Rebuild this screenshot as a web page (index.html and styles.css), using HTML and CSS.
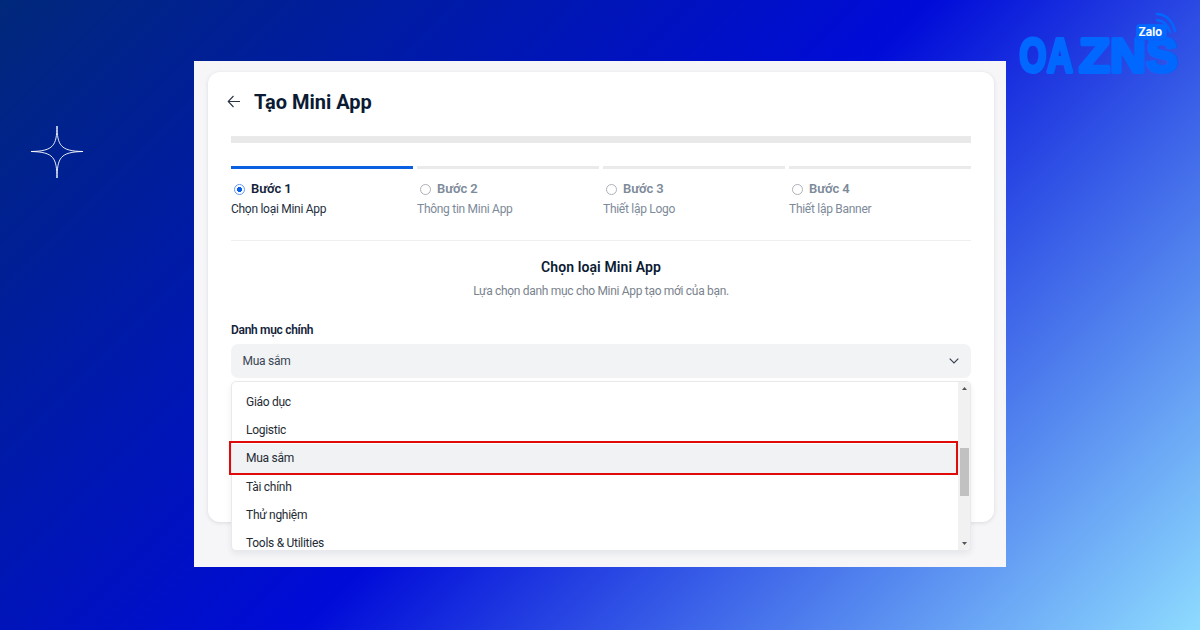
FILE: index.html
```
<!DOCTYPE html>
<html lang="vi">
<head>
<meta charset="utf-8">
<title>Tạo Mini App</title>
<link rel="stylesheet" href="styles.css">
</head>
<body>
<main class="stage">
  <svg class="spark" viewBox="0 0 54 54" aria-hidden="true"><path d="M27 1C27.4 20 30 26.2 53 26.500C30 27 27.4 33 27 53C26.6 33 24 27 1 26.500C24 26.2 26.6 20 27 1Z"/></svg>

  <svg class="logo" viewBox="0 0 170 72" role="img" aria-label="Zalo OA ZNS">
    <g class="logo-letters">
      <text x="9.500" y="63" textLength="27" lengthAdjust="spacingAndGlyphs">O</text>
      <text x="37" y="63" textLength="26" lengthAdjust="spacingAndGlyphs">A</text>
      <text x="69" y="63" textLength="31" lengthAdjust="spacingAndGlyphs">Z</text>
      <text x="100" y="63" textLength="36" lengthAdjust="spacingAndGlyphs">N</text>
      <text x="136.500" y="63" textLength="31" lengthAdjust="spacingAndGlyphs">S</text>
    </g>
    <path class="logo-bubble" d="M130 15H153Q157 15 157 19V27Q157 31 153 31H143L138 34V31H130Q126 31 126 27V19Q126 15 130 15Z"/>
    <text class="logo-zalo" x="128.500" y="27" textLength="23.500" lengthAdjust="spacingAndGlyphs">Zalo</text>
    <g class="logo-waves">
      <path d="M147 5C157 5.500 163 13 165 22"/>
      <path d="M147 11C153 11.500 158 16 160 23"/>
    </g>
  </svg>

  <section class="panel">
    <div class="card">
      <header class="head">
        <svg class="back" viewBox="0 0 14 14"><path d="M13 6.500H1.500M6.500 1L1.200 6.500L6.500 12"/></svg>
        <h1 class="title">Tạo Mini App</h1>
      </header>
      <div class="bar"></div>
      <div class="steps">
        <div class="step active"><div class="step-name"><i class="radio"></i>Bước 1</div><div class="step-text">Chọn loại Mini App</div></div>
        <div class="step"><div class="step-name"><i class="radio"></i>Bước 2</div><div class="step-text">Thông tin Mini App</div></div>
        <div class="step"><div class="step-name"><i class="radio"></i>Bước 3</div><div class="step-text">Thiết lập Logo</div></div>
        <div class="step"><div class="step-name"><i class="radio"></i>Bước 4</div><div class="step-text">Thiết lập Banner</div></div>
      </div>
      <h2 class="subtitle">Chọn loại Mini App</h2>
      <p class="hint">Lựa chọn danh mục cho Mini App tạo mới của bạn.</p>
      <div class="label">Danh mục chính</div>
      <div class="select">
        <span>Mua sắm</span>
        <svg class="chevron" viewBox="0 0 10 6"><path d="M.7 .7L5 5L9.300 .7"/></svg>
        <div class="menu">
          <ul class="options">
            <li>Giáo dục</li>
            <li>Logistic</li>
            <li class="chosen">Mua sắm</li>
            <li>Tài chính</li>
            <li>Thử nghiệm</li>
            <li>Tools &amp; Utilities</li>
          </ul>
          <div class="scroll">
            <svg class="tri" viewBox="0 0 5 3"><path d="M0 3L2.500 0L5 3Z"/></svg>
            <div class="thumb"></div>
            <svg class="tri" viewBox="0 0 5 3"><path d="M0 0L2.500 3L5 0Z"/></svg>
          </div>
          <div class="marker"></div>
        </div>
      </div>
    </div>
  </section>
</main>
</body>
</html>
```
FILE: styles.css
```
* { box-sizing: border-box; }
body { margin: 0; font-family: Roboto, "Liberation Sans", sans-serif; }
.stage {
  position: relative;
  width: 1200px;
  height: 630px;
  padding: 61px 194px 63px;
  overflow: hidden;
  background: linear-gradient(135deg, #00287a 0%, #000bd8 50.8%, #8edbff 100%);
}
.spark { position: absolute; left: 30px; top: 125px; width: 54px; height: 54px; }
.spark path { fill: none; stroke: #fff; stroke-width: .9; }

.logo { position: absolute; left: 1010px; top: 9px; width: 170px; height: 72px; }
.logo-letters { font: 700 48px "Liberation Sans", sans-serif; fill: #0068ff; stroke: #0068ff; stroke-width: 3.8; stroke-linejoin: round; }
.logo-bubble { fill: #0068ff; stroke: #1a50ea; stroke-width: .5; }
.logo-zalo { font: 600 11.5px Inter, sans-serif; fill: #fff; stroke: #fff; stroke-width: .2; }
.logo-waves { fill: none; stroke: #0068ff; stroke-width: 2.4; stroke-linecap: round; }

.panel { width: 812px; height: 506px; padding: 11px 12px 45px 14px; background: #f6f6f8; }
.card {
  height: 450px;
  padding: 16px 23px 0;
  background: #fff;
  border-radius: 12px;
  box-shadow: 0 1px 4px rgba(20, 30, 50, .12);
}
.head { display: flex; align-items: center; gap: 13px; height: 27px; margin-left: -4px; }
.back { width: 14px; height: 14px; }
.back path { fill: none; stroke: #2b3444; stroke-width: 1.1; }
.title { margin: 0; padding-top: 1px; font-size: 20px; font-weight: 700; line-height: 27px; color: #0b1b33; white-space: nowrap; }
.bar { height: 7px; margin-top: 21px; background: #e9e9e9; }
.steps {
  display: grid;
  grid-template-columns: repeat(4, 1fr);
  gap: 4px;
  height: 98px;
  padding-top: 23px;
  border-bottom: 1px solid #eeeff0;
}
.step { padding-top: 12px; color: #7d8a99; background: linear-gradient(#eaeaea, #eaeaea) 0 0 / 100% 3px no-repeat; }
.step.active { color: #25303f; background-image: linear-gradient(#0a60e0, #0a60e0); }
.step-name { display: flex; align-items: center; gap: 6px; padding-left: 3px; font-size: 13px; font-weight: 600; line-height: 22px; letter-spacing: -.1px; }
.step.active .step-name { color: #14233a; }
.step-text { font-size: 12px; line-height: 19px; letter-spacing: -.28px; white-space: nowrap; }
.radio { width: 11px; height: 11px; border: 1px solid #adb2b8; border-radius: 50%; }
.step.active .radio { border-color: #6499ee; background: radial-gradient(circle, #0b5fe6 0 2.3px, transparent 2.8px); }
.subtitle { margin: 15px 0 0; font-size: 14px; font-weight: 600; line-height: 22px; letter-spacing: .1px; color: #0b1b33; text-align: center; }
.hint { margin: 4px 0 0; font-size: 12px; line-height: 18px; letter-spacing: -.31px; color: #7a838d; text-align: center; }
.label { margin-top: 21px; font-size: 12px; font-weight: 600; line-height: 19px; letter-spacing: -.31px; color: #14233a; }
.select {
  position: relative;
  display: flex;
  align-items: center;
  justify-content: space-between;
  height: 34px;
  margin-top: 4px;
  padding: 0 12px 0 11.5px;
  border-radius: 7px;
  background: #f2f3f5;
  font-size: 12px;
  letter-spacing: -.28px;
  color: #3b4654;
}
.chevron { width: 10px; height: 6px; }
.chevron path { fill: none; stroke: #39424e; stroke-width: 1.2; }
.menu {
  position: absolute;
  left: 0;
  top: 37px;
  display: flex;
  width: 740px;
  height: 170px;
  border: 1px solid #e8e9ec;
  border-radius: 5px;
  background: #fff;
  box-shadow: 0 3px 6px rgba(20, 30, 50, .07);
}
.options { flex: 1; height: 168px; margin: 0; padding: 5.8px 0 0; overflow: hidden; list-style: none; color: #252b33; }
.options li { height: 28.3px; padding-left: 14px; line-height: 28.3px; }
.options .chosen { background: #f1f2f4; }
.scroll {
  display: flex;
  flex-direction: column;
  align-items: center;
  justify-content: space-between;
  width: 12px;
  padding: 5px 0;
  border-radius: 0 5px 5px 0;
  background: #f1f1f1;
}
.tri { width: 5px; height: 3px; fill: #50545a; }
.thumb { width: 9px; height: 48px; margin-top: 12px; background: #c1c1c1; }
.marker { position: absolute; left: -3px; top: 59px; width: 729px; height: 34px; border: 2px solid #df0b0b; }
```
